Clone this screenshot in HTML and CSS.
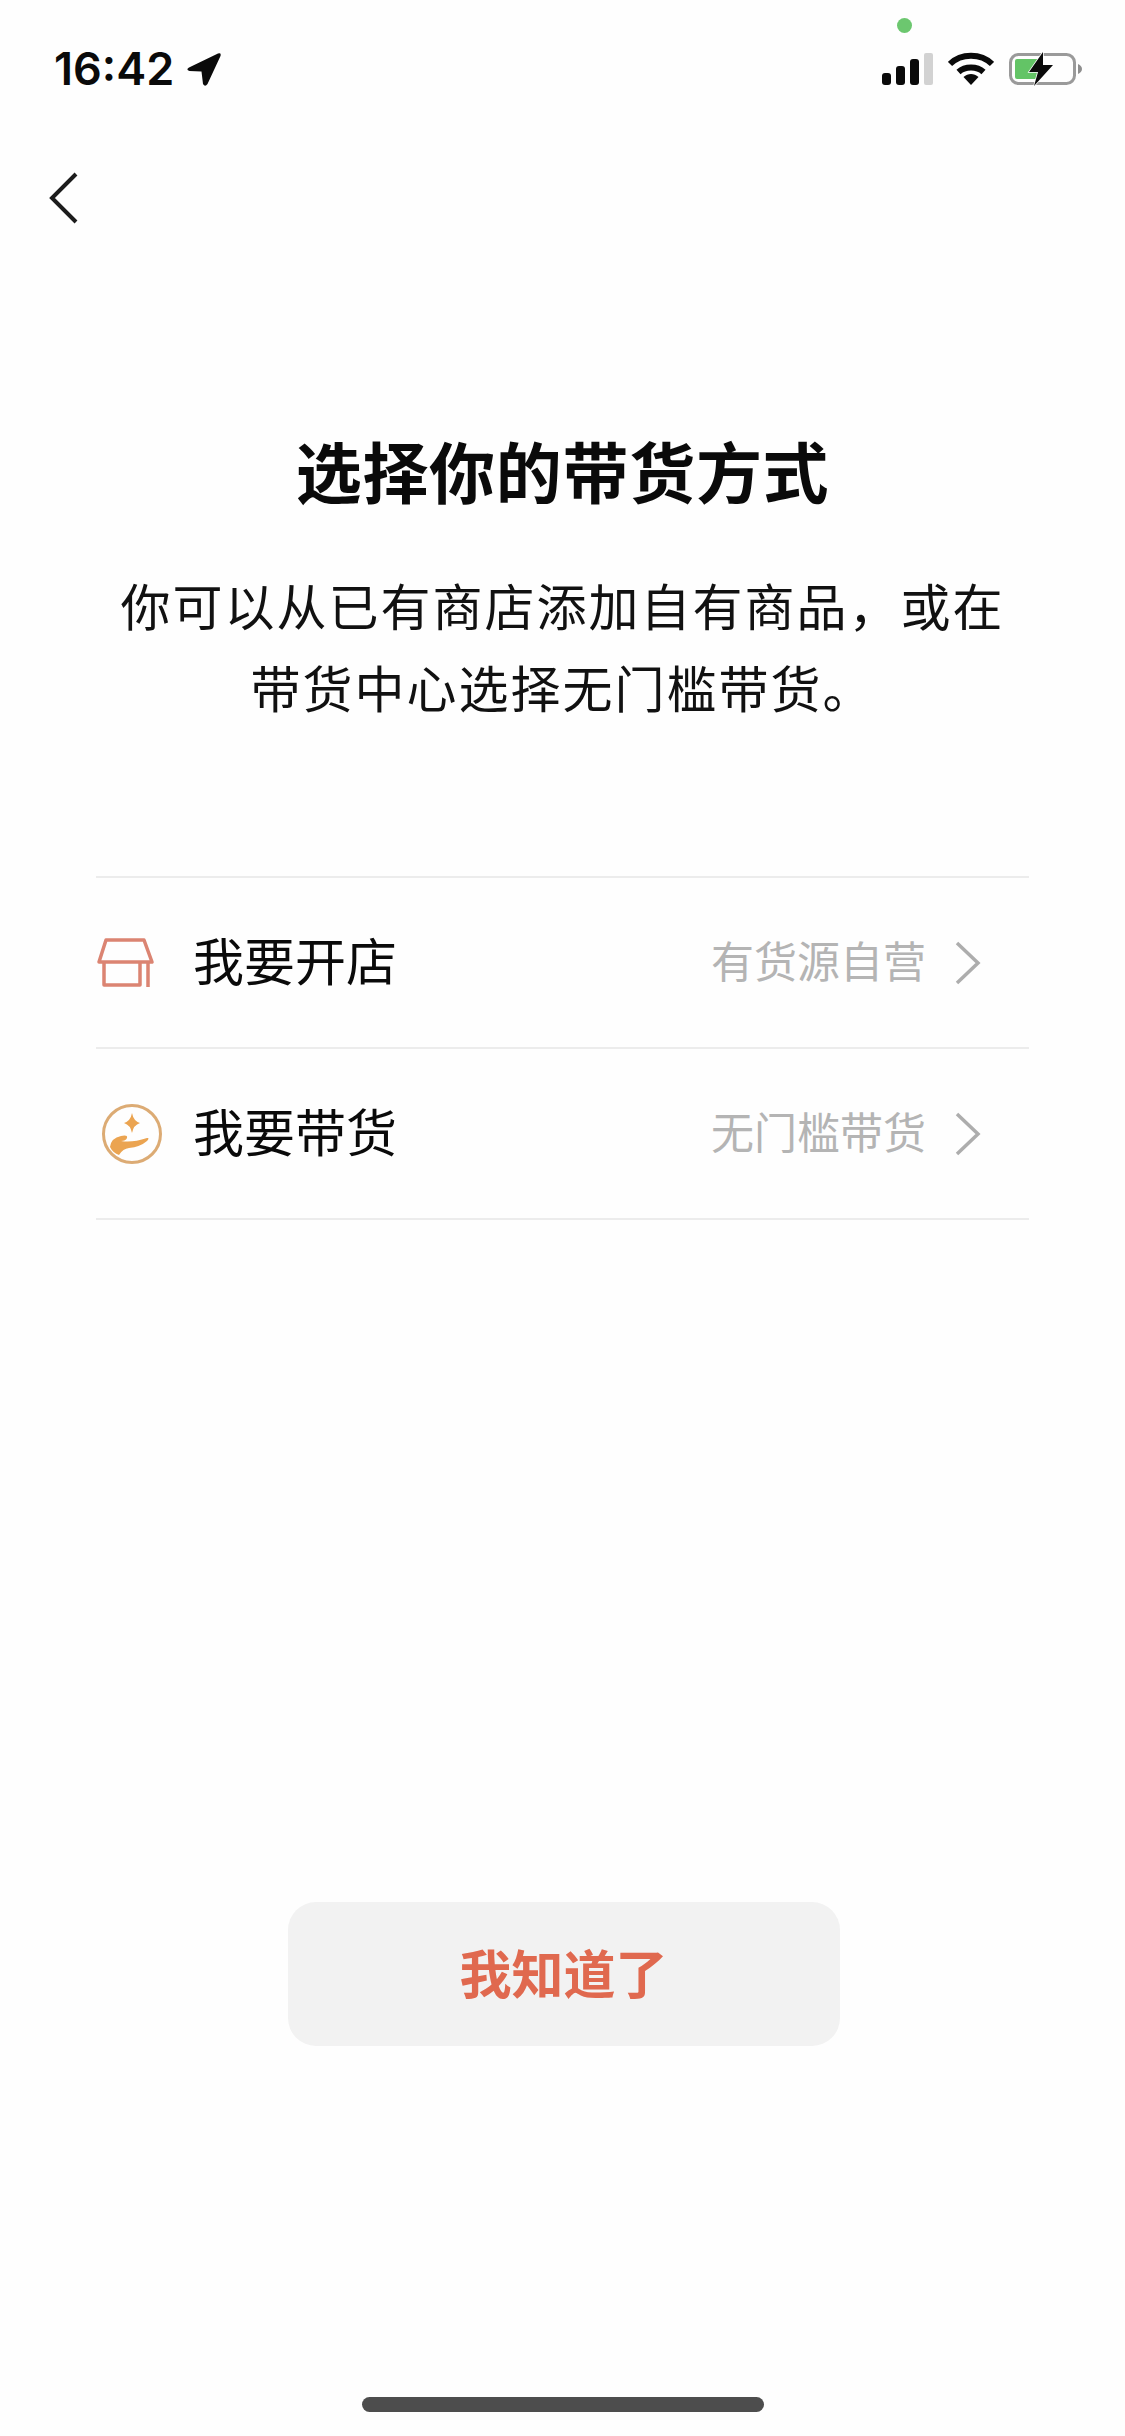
FILE: index.html
```html
<!DOCTYPE html>
<html lang="zh-CN">
<head>
    <meta charset="UTF-8">
    <meta name="viewport" content="width=device-width, initial-scale=1.0">
    <title>选择你的带货方式</title>
    <link rel="stylesheet" href="styles.css">
</head>
<body>
    <div class="page">
        <!-- 状态栏 -->
        <div class="status-bar">
            <div class="status-left">
                <span class="time">16:42</span>
                <svg class="loc-icon" width="36" height="36" viewBox="0 0 36 36">
                    <path d="M3 16.5 L32 2.5 Q35.5 1.5 34.5 5 L21.5 33 Q19 36.5 17 33 L15.5 20.5 L3.5 20 Q-0.5 18.5 3 16.5 Z" fill="#0a0a0a"/>
                </svg>
            </div>
            <div class="status-right">
                <svg width="52" height="34" viewBox="0 0 52 34">
                    <rect x="1" y="21" width="9" height="12" rx="3" fill="#0a0a0a"/>
                    <rect x="15" y="14" width="9" height="19" rx="3" fill="#0a0a0a"/>
                    <rect x="29" y="7" width="9" height="26" rx="3" fill="#0a0a0a"/>
                    <rect x="43" y="1" width="9" height="32" rx="2" fill="#d2d2d2"/>
                </svg>
                <svg width="46" height="34" viewBox="0 0 46 34">
                    <path d="M2 12 C13 1 33 1 44 12" fill="none" stroke="#0a0a0a" stroke-width="6"/>
                    <path d="M10.5 20 C17 14 29 14 35.5 20" fill="none" stroke="#0a0a0a" stroke-width="6"/>
                    <path d="M15.5 25 C20 21 26 21 30.5 25 L23 33 Z" fill="#0a0a0a"/>
                </svg>
                <svg width="74" height="36" viewBox="0 0 74 36">
                    <rect x="1.5" y="2.5" width="64" height="29" rx="8" fill="none" stroke="#9a9a9a" stroke-width="3"/>
                    <path d="M6 9 Q6 7 8 7 L28 7 L28 27 L8 27 Q6 27 6 25 Z" fill="#63c466"/>
                    <path d="M69 12 Q73 14 73 17 Q73 20 69 22 Z" fill="#8e8e8e"/>
                    <path d="M34 0 L20 20 L29 20 L25 34 L44 13 L34 13 Z" fill="#0a0a0a" stroke="#fefefe" stroke-width="1.5" paint-order="stroke"/>
                </svg>
            </div>
            <span class="mic-dot"></span>
        </div>

        <div class="nav-bar">
            <svg width="30" height="54" viewBox="0 0 30 54">
                <path d="M27 3 L3 27 L27 51" fill="none" stroke="#1c1c1c" stroke-width="4"/>
            </svg>
        </div>

        <h1 class="title">选择你的带货方式</h1>
        <p class="desc">你可以从已有商店添加自有商品，或在<br>带货中心选择无门槛带货。</p>

        <div class="option-list">
            <div class="option-row">
                <svg class="option-icon" width="68" height="52" viewBox="0 0 68 52">
                    <path d="M10 3 L48 3 L56 25 L3 25 Z" fill="none" stroke="#db8472" stroke-width="3.5" stroke-linejoin="round"/>
                    <path d="M8 25 L8 48 L44 48 L44 25 M52 25 L52 50" fill="none" stroke="#db8472" stroke-width="3.5" stroke-linejoin="round"/>
                </svg>
                <span class="option-name">我要开店</span>
                <span class="option-note">有货源自营</span>
                <svg class="chevron" width="26" height="44" viewBox="0 0 26 44">
                    <path d="M2 2 L23 22 L2 42" fill="none" stroke="#adadad" stroke-width="3.5"/>
                </svg>
            </div>
            <div class="option-row">
                <svg class="option-icon" width="68" height="62" viewBox="0 0 68 62">
                    <circle cx="36" cy="31" r="28.5" fill="none" stroke="#dcab74" stroke-width="3"/>
                    <path d="M36 10 Q37.5 18 44 20 Q37.5 22 36 30 Q34.5 22 28 20 Q34.5 18 36 10 Z" fill="#eba451"/>
                    <path d="M14 44 Q15 35 25 33 Q32 31.5 31 35 Q30 38 25 38 Q36 40 51 35 Q54 34.5 51 38 Q44 44 33 45 Q27 45.5 23 52 Q17 50 14 44 Z" fill="#eba451"/>
                </svg>
                <span class="option-name">我要带货</span>
                <span class="option-note">无门槛带货</span>
                <svg class="chevron" width="26" height="44" viewBox="0 0 26 44">
                    <path d="M2 2 L23 22 L2 42" fill="none" stroke="#adadad" stroke-width="3.5"/>
                </svg>
            </div>
        </div>

        <div class="footer">
            <button type="button" class="ok-button">我知道了</button>
        </div>

        <div class="home-indicator"></div>
    </div>
</body>
</html>
```

FILE: styles.css
```css
body {
    margin: 0;
    background-color: #fefefe;
    font-family: "Noto Sans CJK SC", "Liberation Sans", sans-serif;
}
.page {
    position: relative;
    width: 1125px;
    height: 2436px;
    display: flex;
    flex-direction: column;
    overflow: hidden;
}
.status-bar {
    height: 52px;
    padding: 49px 42px 0 54px;
    display: flex;
    justify-content: space-between;
    align-items: flex-start;
}
.status-left {
    display: flex;
    align-items: center;
    gap: 12px;
}
.time {
    font-family: Inter, "Liberation Sans", sans-serif;
    font-size: 45px;
    font-weight: 600;
    line-height: 40px;
    color: #0a0a0a;
}
.status-right {
    display: flex;
    align-items: flex-start;
    gap: 15px;
    margin-top: 3px;
}
.mic-dot {
    position: absolute;
    left: 897px;
    top: 18px;
    width: 15px;
    height: 15px;
    border-radius: 50%;
    background-color: #6cc76f;
}
.nav-bar {
    height: 54px;
    padding: 70px 0 0 49px;
}
.title {
    margin: 196px 0 0;
    text-align: center;
    font-size: 66px;
    font-weight: 700;
    letter-spacing: 0.7px;
    line-height: 96px;
    color: #0a0a0a;
}
.desc {
    margin: 46px 0 0;
    text-align: center;
    font-size: 50px;
    letter-spacing: 2px;
    line-height: 82px;
    color: #111;
}
.option-list {
    margin: 149px 96px 0 96px;
    border-top: 2px solid #ececec;
}
.option-row {
    height: 169px;
    display: flex;
    align-items: center;
    border-bottom: 2px solid #ececec;
}
.option-icon {
    flex: none;
    margin-right: 29px;
}
.option-name {
    padding-bottom: 8px;
    font-size: 51px;
    color: #0a0a0a;
}
.option-note {
    margin-left: auto;
    padding-bottom: 8px;
    font-size: 43px;
    color: #b4b4b4;
}
.chevron {
    margin: 0 48px 0 29px;
}
.footer {
    margin-top: 682px;
    padding-left: 2px;
    display: flex;
    justify-content: center;
}
.ok-button {
    width: 552px;
    height: 144px;
    padding: 0 0 6px;
    border: none;
    border-radius: 28px;
    background-color: #f2f2f2;
    color: #e0694f;
    font-family: inherit;
    font-size: 52px;
    font-weight: 700;
}
.home-indicator {
    position: absolute;
    left: 362px;
    top: 2397px;
    width: 402px;
    height: 15px;
    border-radius: 8px;
    background-color: #4d4d4d;
}
```
